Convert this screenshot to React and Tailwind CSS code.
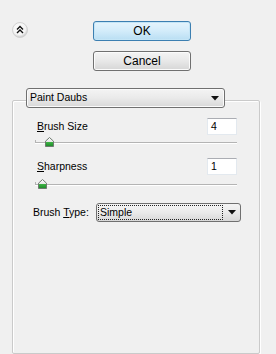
import React from "react";

function Thumb() {
  return (
    <svg width="9" height="10" viewBox="0 0 9 10">
      <defs>
        <linearGradient id="tg" x1="0" y1="0" x2="0" y2="1">
          <stop offset="0" stopColor="#ffffff" />
          <stop offset="0.45" stopColor="#e8e8e8" />
          <stop offset="0.55" stopColor="#3cb043" />
          <stop offset="1" stopColor="#1e8a28" />
        </linearGradient>
      </defs>
      <path d="M4.5 0.5 L8.5 4.2 L8.5 9.5 L0.5 9.5 L0.5 4.2 Z" fill="url(#tg)" stroke="#6e7a70" strokeWidth="1" />
    </svg>
  );
}

function Slider({ pos }) {
  return (
    <div className="relative h-[12px] ml-[22px] mr-[22px]">
      <div className="absolute left-0 right-0 top-[5px] h-[1px] bg-[#b4b4b4]" />
      <div className="absolute left-0 right-0 top-[6px] h-[1px] bg-[#ffffff]" />
      <div className="absolute left-0 top-[3px] w-[1px] h-[3px] bg-[#b4b4b4]" />
      <div className="absolute top-[0px]" style={{ left: pos }}>
        <Thumb />
      </div>
    </div>
  );
}

function Arrow() {
  return (
    <svg width="8" height="5" viewBox="0 0 8 5">
      <path d="M0 0 L8 0 L4 4.5 Z" fill="#111" />
    </svg>
  );
}

export default function App() {
  return (
    <div className="w-[276px] h-[354px] bg-[#f0f0f0] overflow-hidden flex flex-col font-['Liberation_Sans',Arial,sans-serif] text-black">
      <div className="flex pt-[21px] pl-[12px]">
        <div className="mt-[1px] w-[16px] h-[16px]">
          <svg width="16" height="16" viewBox="0 0 16 16">
            <defs>
              <radialGradient id="cg" cx="0.45" cy="0.4" r="0.6">
                <stop offset="0" stopColor="#ffffff" />
                <stop offset="0.7" stopColor="#f4f4f4" />
                <stop offset="1" stopColor="#c8c8c8" />
              </radialGradient>
            </defs>
            <circle cx="8" cy="8" r="7.5" fill="url(#cg)" stroke="#d2d2d2" strokeWidth="1" />
            <path d="M5 7.5 L8 4.5 L11 7.5" fill="none" stroke="#111" strokeWidth="1.4" />
            <path d="M5 11 L8 8 L11 11" fill="none" stroke="#111" strokeWidth="1.4" />
          </svg>
        </div>
        <div className="ml-[65px] flex flex-col gap-[10px]">
          <div className="w-[98px] h-[20px] rounded-[3px] border border-[#3c7fb1] bg-gradient-to-b from-[#e5f4fc] via-[#d3ecfa] to-[#b9def3] shadow-[inset_0_0_0_1px_#c4e5f6] flex items-center justify-center text-[12px] leading-none">
            OK
          </div>
          <div className="w-[98px] h-[20px] rounded-[3px] border border-[#707070] bg-gradient-to-b from-[#f4f4f4] via-[#e8e8e8] to-[#d6d6d6] shadow-[inset_0_0_0_1px_#fbfbfb] flex items-center justify-center text-[12px] leading-none">
            Cancel
          </div>
        </div>
      </div>

      <div className="ml-[12px] w-[248px] mt-[17px] flex flex-col flex-1">
        <div className="relative z-10 ml-[14px] w-[199px] h-[20px] rounded-[3px] border border-[#707070] bg-gradient-to-b from-[#f4f4f4] via-[#eaeaea] to-[#d8d8d8] shadow-[inset_0_0_0_1px_#fbfbfb] flex items-center justify-between pl-[3px] pr-[5px] text-[10.5px]">
          <span>Paint Daubs</span>
          <Arrow />
        </div>
        <div className="-mt-[8px] flex-1 border border-[#cacaca] shadow-[inset_1px_1px_0_#ffffff,1px_1px_0_#ffffff] rounded-[2px] pt-[17px]">
          <div className="flex items-center justify-between pl-[24px] pr-[22px]">
            <span className="text-[10.5px]"><span className="underline">B</span>rush Size</span>
            <div className="w-[30px] h-[17px] bg-white border border-[#e3e9ef] border-t-[#abadb3] pl-[3px] text-[10.5px] flex items-center">4</div>
          </div>
          <div className="mt-[2px]">
            <Slider pos="10px" />
          </div>
          <div className="mt-[9px] flex items-center justify-between pl-[24px] pr-[22px]">
            <span className="text-[10.5px]"><span className="underline">S</span>harpness</span>
            <div className="w-[30px] h-[17px] bg-white border border-[#e3e9ef] border-t-[#abadb3] pl-[3px] text-[10.5px] flex items-center">1</div>
          </div>
          <div className="mt-[4px]">
            <Slider pos="3px" />
          </div>
          <div className="mt-[12px] flex items-center pl-[20px]">
            <span className="text-[10.5px] w-[63px]">Brush <span className="underline">T</span>ype:</span>
            <div className="w-[145px] h-[19px] rounded-[3px] border border-[#707070] bg-gradient-to-b from-[#f4f4f4] via-[#eaeaea] to-[#d8d8d8] flex items-center pl-[1px] pr-[4px]">
              <div className="w-[125px] h-[15px] border border-dotted border-[#222] flex items-center pl-[1px] text-[10.5px]">Simple</div>
              <div className="flex-1 flex justify-end">
                <Arrow />
              </div>
            </div>
          </div>
        </div>
      </div>
    </div>
  );
}
